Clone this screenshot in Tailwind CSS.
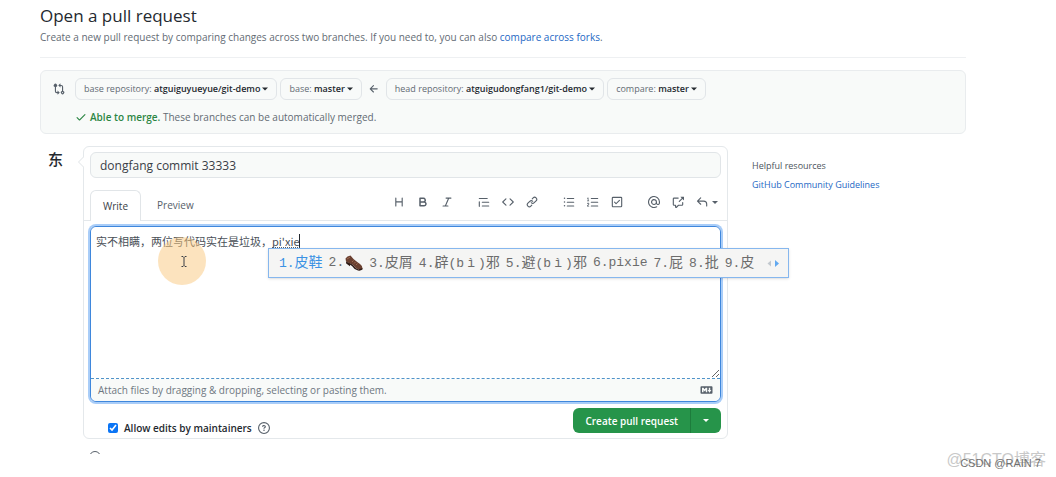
<!DOCTYPE html>
<html lang="en">
<head>
<meta charset="utf-8">
<meta name="viewport" content="width=device-width, initial-scale=1">
<title>Open a pull request</title>
<script src="https://cdn.jsdelivr.net/npm/@tailwindcss/browser@4"></script>
</head>
<body class="relative min-h-screen overflow-x-hidden bg-white font-['Open_Sans','Noto_Sans_CJK_SC',sans-serif] text-[10px] leading-4 text-[#24292f]">
<main class="ml-10 mr-[90px] pt-1">
  <header class="border-b border-[#eef0f2] pb-3">
    <h1 class="text-[17px] leading-6">Open a pull request</h1>
    <p class="mt-px text-[#636b74]">Create a new pull request by comparing changes across two branches. If you need to, you can also <a href="#" class="text-[#2468c4]">compare across forks</a>.</p>
  </header>

  <section class="mt-3 rounded-md border border-[#e9ecee] bg-[#f8faf9] px-3 pt-[7px] pb-2">
    <div class="flex items-center text-[9px] text-[#636b74]">
      <svg class="mr-[10px] size-3 fill-[#57606a]" viewBox="0 0 16 16"><path d="M9.573.677A.25.25 0 0110 .854V2.5h1A2.5 2.5 0 0113.5 5v5.628a2.251 2.251 0 11-1.5 0V5a1 1 0 00-1-1h-1v1.646a.25.25 0 01-.427.177L7.177 3.427a.25.25 0 010-.354L9.573.677zM6 12v-1.646a.25.25 0 01.427-.177l2.396 2.396a.25.25 0 010 .354l-2.396 2.396A.25.25 0 016 15.146V13.5H5A2.5 2.5 0 012.5 11V5.372a2.25 2.25 0 111.5 0V11a1 1 0 001 1h1zm6.75 0a.75.75 0 100 1.5.75.75 0 000-1.5zM4 3.25a.75.75 0 11-1.5 0 .75.75 0 011.5 0z"/></svg>
      <button class="flex h-[22px] items-center rounded-md border border-[#e1e5e8] px-2 whitespace-nowrap">base repository:&nbsp;<b class="font-semibold text-[#24292f]">atguiguyueyue/git-demo</b><svg class="ml-[2px] h-1 w-[6px] fill-[#24292f]" viewBox="0 0 8 4"><path d="M0 0h8L4 4z"/></svg></button>
      <button class="ml-[3px] flex h-[22px] items-center rounded-md border border-[#e1e5e8] px-2 whitespace-nowrap">base:&nbsp;<b class="font-semibold text-[#24292f]">master</b><svg class="ml-[2px] h-1 w-[6px] fill-[#24292f]" viewBox="0 0 8 4"><path d="M0 0h8L4 4z"/></svg></button>
      <svg class="mx-[6px] size-3 fill-[#57606a]" viewBox="0 0 16 16"><path d="M7.78 12.53a.75.75 0 01-1.06 0L2.47 8.28a.75.75 0 010-1.06l4.25-4.25a.75.75 0 011.06 1.06L4.81 7h7.44a.75.75 0 010 1.5H4.81l2.97 2.97a.75.75 0 010 1.06z"/></svg>
      <button class="flex h-[22px] items-center rounded-md border border-[#e1e5e8] px-2 whitespace-nowrap">head repository:&nbsp;<b class="font-semibold text-[#24292f]">atguigudongfang1/git-demo</b><svg class="ml-[2px] h-1 w-[6px] fill-[#24292f]" viewBox="0 0 8 4"><path d="M0 0h8L4 4z"/></svg></button>
      <button class="ml-[3px] flex h-[22px] items-center rounded-md border border-[#e1e5e8] px-2 whitespace-nowrap">compare:&nbsp;<b class="font-semibold text-[#24292f]">master</b><svg class="ml-[2px] h-1 w-[6px] fill-[#24292f]" viewBox="0 0 8 4"><path d="M0 0h8L4 4z"/></svg></button>
    </div>
    <p class="mt-[9px] flex items-center pl-[22px] text-[#636b74]">
      <svg class="mr-[3px] size-3 fill-[#2c8644]" viewBox="0 0 16 16"><path d="M13.78 4.22a.75.75 0 010 1.06l-7.25 7.25a.75.75 0 01-1.06 0L2.22 9.28a.75.75 0 011.06-1.06L6 10.94l6.72-6.72a.75.75 0 011.06 0z"/></svg>
      <span><b class="font-semibold text-[#2c8644]">Able to merge.</b> These branches can be automatically merged.</span>
    </p>
  </section>

  <div class="mt-3 flex items-start">
    <div class="w-[43px] shrink-0 pt-1 pl-2 text-[15px] leading-[18px] font-medium font-['Noto_Sans_CJK_SC',sans-serif]" lang="zh-CN">东</div>

    <form class="relative min-w-0 flex-1 rounded-md border border-[#e4e8eb] pb-[2px]">
      <svg class="absolute top-[9px] -left-[6px] h-3 w-[6px]" viewBox="0 0 6 12" fill="#fff" stroke="#dfe3e6"><path d="M6 .5L.5 6 6 11.5"/></svg>
      <div class="px-[6px] pt-[5px]">
        <input type="text" aria-label="Title" value="dongfang commit 33333" class="block h-[26px] w-full rounded-md border border-[#e1e5e8] bg-[#f8faf9] px-[9px] text-[12px] text-[#3a4047] outline-none">
      </div>
      <div class="mt-[11px] flex h-8 items-end border-b border-[#e4e8eb] px-[6px] text-[#57606a]">
        <button type="button" class="-mb-px h-[31px] rounded-t-md border border-b-0 border-[#e1e5e8] bg-white px-3 text-[#3a4047]">Write</button>
        <button type="button" class="h-[30px] px-4">Preview</button>
        <div class="mb-3 ml-auto flex gap-[25px]">
          <div class="flex gap-3">
            <button type="button" aria-label="Heading"><svg class="size-3 fill-current" viewBox="0 0 16 16"><path d="M3.75 2a.75.75 0 01.75.75V7h7V2.75a.75.75 0 011.5 0v10.5a.75.75 0 01-1.5 0V8.5h-7v4.75a.75.75 0 01-1.5 0V2.75A.75.75 0 013.75 2z"/></svg></button>
            <button type="button" aria-label="Bold"><svg class="size-3 fill-current" viewBox="0 0 16 16"><path fill-rule="evenodd" d="M4 2a1 1 0 00-1 1v10a1 1 0 001 1h5.5a3.5 3.5 0 001.852-6.47A3.5 3.5 0 008.5 2H4zm4.5 5a1.5 1.5 0 100-3H5v3h3.5zM5 9v3h4.5a1.5 1.5 0 000-3H5z"/></svg></button>
            <button type="button" aria-label="Italic"><svg class="size-3 fill-current" viewBox="0 0 16 16"><path d="M6 2.75A.75.75 0 016.75 2h6.5a.75.75 0 010 1.5h-2.505l-3.858 9H9.25a.75.75 0 010 1.5h-6.5a.75.75 0 010-1.5h2.505l3.858-9H6.75A.75.75 0 016 2.75z"/></svg></button>
          </div>
          <div class="flex gap-3">
            <button type="button" aria-label="Quote"><svg class="size-3 fill-current" viewBox="0 0 16 16"><path d="M1.75 2.5a.75.75 0 000 1.5h10.5a.75.75 0 000-1.5H1.75zm4 5a.75.75 0 000 1.5h8.5a.75.75 0 000-1.5h-8.5zm0 5a.75.75 0 000 1.5h8.5a.75.75 0 000-1.5h-8.5zM2.5 7.75a.75.75 0 00-1.5 0v6a.75.75 0 001.5 0v-6z"/></svg></button>
            <button type="button" aria-label="Code"><svg class="size-3 fill-current" viewBox="0 0 16 16"><path d="M4.72 3.22a.75.75 0 011.06 1.06L2.06 8l3.72 3.72a.75.75 0 11-1.06 1.06L.47 8.53a.75.75 0 010-1.06l4.25-4.25zm6.56 0a.75.75 0 10-1.06 1.06L13.94 8l-3.72 3.72a.75.75 0 101.06 1.06l4.25-4.25a.75.75 0 000-1.06l-4.25-4.25z"/></svg></button>
            <button type="button" aria-label="Link"><svg class="size-3 fill-current" viewBox="0 0 16 16"><path d="M7.775 3.275a.75.75 0 001.06 1.06l1.25-1.25a2 2 0 112.83 2.83l-2.5 2.5a2 2 0 01-2.83 0 .75.75 0 00-1.06 1.06 3.5 3.5 0 004.95 0l2.5-2.5a3.5 3.5 0 00-4.95-4.95l-1.25 1.25zm-4.69 9.64a2 2 0 010-2.83l2.5-2.5a2 2 0 012.83 0 .75.75 0 001.06-1.06 3.5 3.5 0 00-4.95 0l-2.5 2.5a3.5 3.5 0 004.95 4.95l1.25-1.25a.75.75 0 00-1.06-1.06l-1.25 1.25a2 2 0 01-2.83 0z"/></svg></button>
          </div>
          <div class="flex gap-3">
            <button type="button" aria-label="Bulleted list"><svg class="size-3 fill-current" viewBox="0 0 16 16"><path d="M2 4a1 1 0 100-2 1 1 0 000 2zm3.75-1.5a.75.75 0 000 1.5h8.5a.75.75 0 000-1.5h-8.5zm0 5a.75.75 0 000 1.5h8.5a.75.75 0 000-1.5h-8.5zm0 5a.75.75 0 000 1.5h8.5a.75.75 0 000-1.5h-8.5zM3 8a1 1 0 11-2 0 1 1 0 012 0zm-1 6a1 1 0 100-2 1 1 0 000 2z"/></svg></button>
            <button type="button" aria-label="Numbered list"><svg class="size-3 fill-current" viewBox="0 0 16 16"><path d="M2.003 2.5a.5.5 0 00-.723-.447l-1.003.5a.5.5 0 00.446.895l.28-.14V6H.5a.5.5 0 000 1h2.006a.5.5 0 100-1h-.503V2.5zM5 3.25a.75.75 0 01.75-.75h8.5a.75.75 0 010 1.5h-8.5A.75.75 0 015 3.25zm0 5a.75.75 0 01.75-.75h8.5a.75.75 0 010 1.5h-8.5A.75.75 0 015 8.25zm0 5a.75.75 0 01.75-.75h8.5a.75.75 0 010 1.5h-8.5a.75.75 0 01-.75-.75zM.924 10.32l.003-.004a.851.851 0 01.144-.153A.66.66 0 011.5 10c.195 0 .306.068.374.146a.57.57 0 01.128.376c0 .453-.269.682-.8 1.078l-.035.025C.692 11.98 0 12.495 0 13.5a.5.5 0 00.5.5h2.003a.5.5 0 000-1H1.146c.132-.197.351-.372.654-.597l.047-.035c.47-.35 1.156-.858 1.156-1.845 0-.365-.118-.744-.377-1.038-.268-.303-.658-.484-1.126-.484-.48 0-.84.202-1.068.392a1.858 1.858 0 00-.348.384l-.007.011a.5.5 0 00.847.533z"/></svg></button>
            <button type="button" aria-label="Task list"><svg class="size-3 fill-current" viewBox="0 0 16 16"><path fill-rule="evenodd" d="M2.5 2.75a.25.25 0 01.25-.25h10.5a.25.25 0 01.25.25v10.5a.25.25 0 01-.25.25H2.75a.25.25 0 01-.25-.25V2.75zM2.75 1A1.75 1.75 0 001 2.75v10.5c0 .966.784 1.75 1.75 1.75h10.5A1.75 1.75 0 0015 13.25V2.75A1.75 1.75 0 0013.25 1H2.75zm9.03 5.28a.75.75 0 00-1.06-1.06L6.75 9.19 5.28 7.72a.75.75 0 00-1.06 1.06l2 2a.75.75 0 001.06 0l4.5-4.5z"/></svg></button>
          </div>
          <div class="flex gap-3">
            <button type="button" aria-label="Mention"><svg class="size-3 fill-current" viewBox="0 0 16 16"><path fill-rule="evenodd" d="M4.75 2.37a6.5 6.5 0 006.5 11.26.75.75 0 01.75 1.298 8 8 0 113.994-7.273.754.754 0 01.006.095v1.5a2.75 2.75 0 01-5.072 1.475A4 4 0 1112 8v1.25a1.25 1.25 0 002.5 0V7.867a6.5 6.5 0 00-9.75-5.496V2.37zM10.5 8a2.5 2.5 0 10-5 0 2.5 2.5 0 005 0z"/></svg></button>
            <button type="button" aria-label="Reference"><svg class="size-3 fill-current" viewBox="0 0 16 16"><path d="M16 1.25v4.146a.25.25 0 01-.427.177L14.03 4.03l-3.75 3.75a.75.75 0 11-1.06-1.06l3.75-3.75-1.543-1.543A.25.25 0 0111.604 1h4.146a.25.25 0 01.25.25zM2.75 3.5a.25.25 0 00-.25.25v7.5c0 .138.112.25.25.25h2a.75.75 0 01.75.75v2.19l2.72-2.72a.75.75 0 01.53-.22h4.5a.25.25 0 00.25-.25v-2.5a.75.75 0 111.5 0v2.5A1.75 1.75 0 0113.25 13H9.06l-2.573 2.573A1.457 1.457 0 014 14.543V13H2.75A1.75 1.75 0 011 11.25v-7.5C1 2.784 1.784 2 2.75 2h5.5a.75.75 0 010 1.5h-5.5z"/></svg></button>
            <button type="button" aria-label="Saved replies" class="flex items-center gap-1 pr-[3px]"><svg class="size-3 fill-current" viewBox="0 0 16 16"><path d="M6.78 1.97a.75.75 0 010 1.06L3.81 6h6.44A4.75 4.75 0 0115 10.75v2.5a.75.75 0 01-1.5 0v-2.5a3.25 3.25 0 00-3.25-3.25H3.81l2.97 2.97a.75.75 0 11-1.06 1.06L1.47 7.28a.75.75 0 010-1.06l4.25-4.25a.75.75 0 011.06 0z"/></svg><svg class="h-[3px] w-[6px] fill-current" viewBox="0 0 8 4"><path d="M0 0h8L4 4z"/></svg></button>
          </div>
        </div>
      </div>

      <div class="relative mx-[6px] mt-[5px] rounded-md border border-[#3f87dc] ring-2 ring-[#a9cdf8]">
        <textarea aria-label="Comment body" class="block h-[152px] w-full resize-y rounded-t-md border-b border-b-[#4f93c9] bg-white px-[5px] py-[6px] text-[11px] leading-4 text-[#4a5057] outline-none [border-bottom-style:dashed] font-['Noto_Sans_CJK_SC',sans-serif]">实不相瞒，两位写代码实在是垃圾，pi'xie</textarea>
        <div class="flex h-[22px] items-center justify-between rounded-b-md bg-[#f8faf9] px-[7px] text-[#6e7781]">
          <span>Attach files by dragging &amp; dropping, selecting or pasting them.</span>
          <svg class="h-3 w-[13px] fill-[#57606a]" viewBox="0 0 16 16"><path fill-rule="evenodd" d="M14.85 3H1.15C.52 3 0 3.52 0 4.15v7.69C0 12.48.52 13 1.15 13h13.69c.64 0 1.15-.52 1.15-1.15v-7.7C16 3.52 15.48 3 14.85 3zM9 11H7V8L5.5 9.92 4 8v3H2V5h2l1.5 2L7 5h2v6zm2.99.5L9.5 8H11V5h2v3h1.5l-2.51 3.5z"/></svg>
        </div>

        <!-- Composition underline and caret -->
        <div class="pointer-events-none absolute top-[7px] left-[181px] h-[14px] w-[28px] border-r border-b border-r-[#24292f] border-b-[#57606a] [border-bottom-style:dotted]"></div>

        <!-- Pointer highlight -->
        <div class="pointer-events-none absolute top-[10px] left-[67px] flex size-12 items-center justify-center rounded-full bg-[#fac77d]/50">
          <svg class="ml-[3px] h-[11px] w-[6px]" viewBox="0 0 6 11" fill="none" stroke="#3a3f45"><path d="M.5.5h1.500L3 1.500 4 .5h1.500M3 1.500v8M.5 10.500h1.500L3 9.500l1 1h1.500"/></svg>
        </div>

        <!-- Input method candidates -->
        <div lang="zh-CN" class="absolute top-[21px] left-[177px] flex h-[30px] w-[521px] items-center gap-[6px] border border-[#86b7ee] bg-[#f5f5f4] pr-[9px] pl-[10px] text-[13px] whitespace-nowrap text-[#6c6c6c] shadow-sm font-['Liberation_Mono','Noto_Sans_CJK_SC',monospace]">
          <span class="text-[#3b92e4]">1.<span class="text-[14px]">皮鞋</span></span>
          <span class="flex items-center">2.<svg class="ml-px h-4 w-[18px]" viewBox="0 0 18 16"><path fill="#6b4030" d="M.5 3.500Q2 1 5.500.500L8.500 4q3 2.500 6.500 5 2.500 1.500 2.500 4.500l-3 1.500Q10 13 7.500 9.500L5 8.500 1 6.500z"/><path fill="#2e1a15" d="M1 6.500l4 1.800 2.500 1.200q2.500 3.500 6 5l4-1.500v1.500q-2 1.500-4.500 1Q9 14.500 7 11L5 9.800v1.400L1.200 8.500z"/><path fill="none" stroke="#a87458" stroke-width=".8" d="M2 4l3-1.800M8.500 5.500L7 7M10.500 7L9 8.500M12.500 8.500L11 10"/></svg></span>
          <span>3.<span class="text-[14px]">皮屑</span></span>
          <span>4.<span class="text-[14px]">辟</span>(b<span class="inline-block w-[14px] text-center">ì</span>)<span class="text-[14px]">邪</span></span>
          <span>5.<span class="text-[14px]">避</span>(b<span class="inline-block w-[14px] text-center">ì</span>)<span class="text-[14px]">邪</span></span>
          <span>6.pixie</span>
          <span>7.<span class="text-[14px]">屁</span></span>
          <span>8.<span class="text-[14px]">批</span></span>
          <span>9.<span class="text-[14px]">皮</span></span>
          <svg class="ml-auto h-[7px] w-3" viewBox="0 0 12 7"><path fill="#c2c8ce" d="M4 .5v6L.5 3.500z"/><path fill="#62a9f0" d="M8 0v7l4-3.500z"/></svg>
        </div>
      </div>

      <div class="mt-[6px] flex items-start px-[6px]">
        <label class="mt-3 ml-[18px] flex items-center gap-[6px] font-semibold">
          <input type="checkbox" checked class="size-[10px] accent-[#0b75f5]">
          Allow edits by maintainers
        </label>
        <a href="#" aria-label="About maintainer edits" class="mt-[14px] ml-[6px]"><svg class="size-3 fill-[#57606a]" viewBox="0 0 16 16"><path fill-rule="evenodd" d="M8 1.500a6.500 6.500 0 100 13 6.500 6.500 0 000-13zM0 8a8 8 0 1116 0A8 8 0 010 8zm9 3a1 1 0 11-2 0 1 1 0 012 0zM6.920 6.085c.081-.16.19-.299.34-.398.145-.097.371-.187.74-.187.28 0 .553.087.738.225A.613.613 0 019 6.250c0 .177-.04.264-.077.318a.956.956 0 01-.277.245c-.076.051-.158.1-.258.161l-.007.004a7.728 7.728 0 00-.313.195 2.416 2.416 0 00-.692.661.75.75 0 001.248.832.956.956 0 01.276-.245 6.300 6.300 0 01.26-.16l.006-.004c.093-.057.204-.123.313-.195.222-.149.487-.355.692-.662.214-.32.329-.702.329-1.150 0-.76-.36-1.348-.863-1.725A2.760 2.760 0 008 4c-.631 0-1.155.16-1.572.438-.413.276-.68.638-.849.977a.75.75 0 001.342.67z"/></svg></a>
        <div class="ml-auto flex h-[25px] rounded-md bg-[#26944a] font-semibold text-white">
          <button type="button" class="border-r border-[#1d7c3c] px-3">Create pull request</button>
          <button type="button" aria-label="More options" class="flex w-[30px] items-center justify-center"><svg class="h-[3px] w-[6px] fill-current" viewBox="0 0 8 4"><path d="M0 0h8L4 4z"/></svg></button>
        </div>
      </div>
    </form>

    <aside class="ml-6 w-[214px] shrink-0 pt-3 text-[9px]">
      <h2 class="font-medium text-[#4c545c]">Helpful resources</h2>
      <a href="#" class="mt-[3px] block text-[#2468c4]">GitHub Community Guidelines</a>
    </aside>
  </div>

  <!-- Top of the next row's icon, cut off by the fold -->
  <div class="mt-3 ml-[49px] h-[3px] overflow-hidden"><div class="size-3 rounded-full border border-[#57606a]"></div></div>
</main>

<div class="absolute right-[10px] bottom-[7px] text-[16px] leading-5 whitespace-nowrap text-[#c9c9c9] font-['Liberation_Sans','Noto_Sans_CJK_SC',sans-serif]">@51CTO博客</div>
<div class="absolute right-[15px] bottom-[6px] text-[11px] leading-4 whitespace-nowrap text-[#707070] font-['Liberation_Sans',sans-serif]">CSDN @RAIN 7</div>
</body>
</html>
